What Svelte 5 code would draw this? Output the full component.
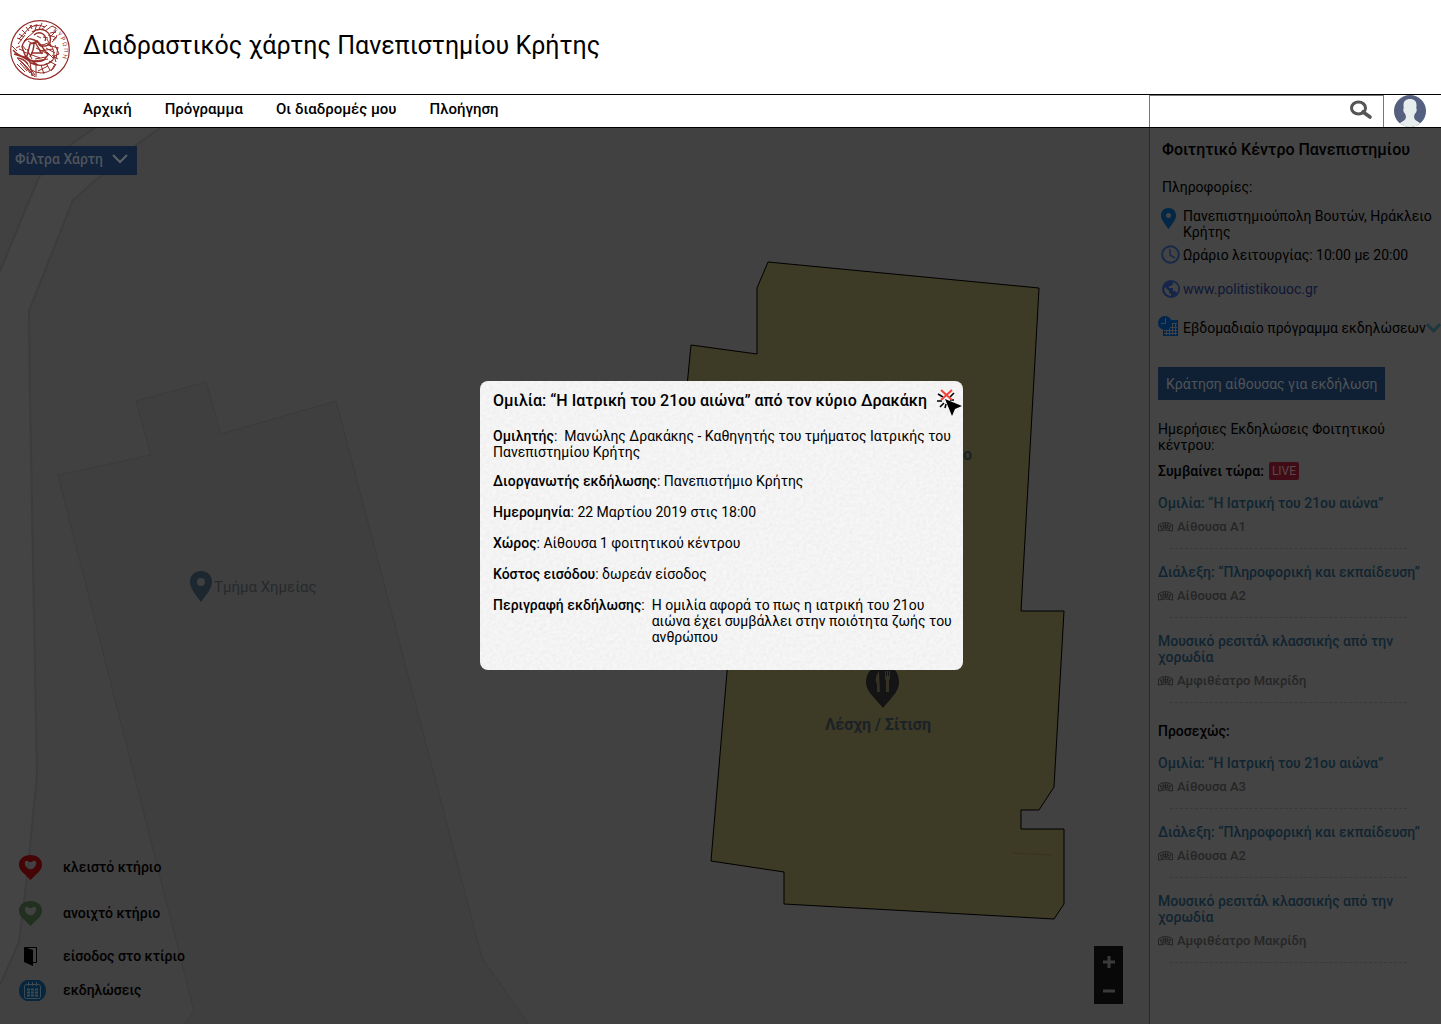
<script>
  const nav = ['Αρχική', 'Πρόγραμμα', 'Οι διαδρομές μου', 'Πλοήγηση'];

  const groups = [
    {
      title: 'Συμβαίνει τώρα:',
      live: true,
      events: [
        { name: 'Ομιλία: “Η Ιατρική του 21ου αιώνα”', room: 'Αίθουσα Α1' },
        { name: 'Διάλεξη: “Πληροφορική και εκπαίδευση”', room: 'Αίθουσα Α2' },
        { name: 'Μουσικό ρεσιτάλ κλασσικής από την χορωδία', room: 'Αμφιθέατρο Μακρίδη' }
      ]
    },
    {
      title: 'Προσεχώς:',
      live: false,
      events: [
        { name: 'Ομιλία: “Η Ιατρική του 21ου αιώνα”', room: 'Αίθουσα Α3' },
        { name: 'Διάλεξη: “Πληροφορική και εκπαίδευση”', room: 'Αίθουσα Α2' },
        { name: 'Μουσικό ρεσιτάλ κλασσικής από την χορωδία', room: 'Αμφιθέατρο Μακρίδη' }
      ]
    }
  ];
</script>

{#snippet heartPin(color)}
  <svg width="23" height="25" viewBox="0 0 23 25" aria-hidden="true">
    <path fill={color} fill-rule="evenodd" d="M11.500 0C18 0 23 4 23 9.500C23 14 20 17 17 19.500L11.500 25L6 19.500C3 17 0 14 0 9.500C0 4 5 0 11.500 0ZM6.500 6C5 8 6 11 8 13Q11.500 15.500 15 13C17 11 18 8 16.500 6Q14 5 13 7H10Q9 5 6.500 6Z" />
  </svg>
{/snippet}

<div class="page">
  <header class="brand">
    <svg class="logo" viewBox="0 0 60 60" fill="none" stroke="#962d28" aria-hidden="true">
      <circle cx="30" cy="30" r="29.300" stroke-width="1.200" />
      <path stroke-width="1.400" d="M22 12Q30 7 36 11Q42 15 40 23Q36 28 29 25M24 15Q28 11 33 14Q37 17 35 21M12 27Q14 18 21 19Q28 20 33 28L38 35L34 40Q27 43 20 40L15 35ZM17 36L20 24L25 22L32 34M21 33H33M24 23Q24 30 20 37M4 34Q16 37 21 43Q33 49 43 40M3 30Q8 36 15 37L28 45M7 38Q13 38 18 44" />
      <path stroke-width="1" d="M9 19L22 5M8 24L15 15M12 20L7 18M14 17L9 14M16 14L12 10M19 11L16 7M22 9L20 5M14 21L18 17L25 11M19 8L26 5M25 10L27 4M29 9L32 3M31 10L37 5M24 6Q30 4 35 7M35 11L42 6L46 8M40 13L46 12M40 17L46 11M43 20L46 17M38 15L45 17M42 22Q47 19 47 15M38 25L48 28M36 28L45 33M37 32L43 38M40 24Q46 31 43 40M45 25L49 34L44 36L46 42M48 27L46 39M48 39L42 35M39 41L46 45M36 43L40 50M31 45L34 54M26 45L26 57M20 42L22 56M8 39Q16 44 23 56M10 43L17 51M12 42L20 53M7 44L15 52M16 42L25 55M9 40Q18 47 25 57M20 49Q31 57 43 49L46 44M28 51L38 46M30 26L38 23M29 31L43 29M26 28L40 35M14 32L30 38M17 29L22 39M27 20L29 25L34 25M9 29L14 31M6 28L10 26M12 25L16 30M25 39L36 37M24 41L38 39M18 21L23 24L29 22M37 19L41 27M33 17L38 18M27 16L31 18M2 26L7 31M45 44L41 51" />
      <path id="ring" stroke="none" d="M43 11A23 23 0 0 1 35 53" />
      <text fill="#962d28" stroke="none" font-size="6"><textPath href="#ring">Ε Υ Ρ Ω Π Η</textPath></text>
    </svg>
    <h1>Διαδραστικός χάρτης Πανεπιστημίου Κρήτης</h1>
  </header>

  <nav class="bar">
    <div class="links">
      {#each nav as item}<a href="#menu">{item}</a>{/each}
    </div>
    <form class="search" role="search">
      <input type="search" aria-label="Αναζήτηση" />
      <button type="button" aria-label="Αναζήτηση">
        <svg width="24" height="20" viewBox="0 0 24 20" fill="none" stroke="#555">
          <ellipse cx="9.500" cy="8" rx="7" ry="6" stroke-width="3" />
          <path d="M14 12L21 17" stroke-width="3.600" stroke-linecap="round" />
        </svg>
      </button>
    </form>
    <a class="avatar" href="#profile" aria-label="Προφίλ">
      <svg width="32" height="32" viewBox="0 0 32 32">
        <defs><clipPath id="face"><circle cx="16" cy="16" r="16" /></clipPath></defs>
        <g clip-path="url(#face)">
          <rect width="32" height="32" fill="#556080" />
          <path fill="#e7eced" d="M16 4C20.500 4 22.500 6.500 22.500 10L22.300 13.500Q23 14 22.600 16Q22 18 21 18.500L20 21.500Q20 24 22 25.500L26 28V33H6V28L10 25.500Q12 24 12 21.500L11 18.500Q10 18 9.400 16Q9 14 9.700 13.500L9.500 10C9.500 6.500 11.500 4 16 4Z" />
        </g>
      </svg>
    </a>
  </nav>

  <main>
    <section class="map" aria-label="Χάρτης">
      <svg class="canvas" width="1149" height="896" viewBox="0 128 1149 896">
        <path fill="#444" d="M0 271L39 177L70 145L95 128H160L136 145L73 200L29 311L30 400L37 775L27 877L19 942L0 985Z" />
        <g fill="none" stroke="#3c3c3c" stroke-width="2">
          <path d="M0 271L39 177L70 145L95 128M160 128L136 145L73 200L29 311L30 400L37 775L27 877L19 942L0 985" />
        </g>
        <path fill="#3f3f3f" stroke="#3b3b3b" d="M58 475L151 455L136 401L206 382L221 434L336 401L380 568L482 958L530 1026H183L194 1011Z" />
        <path fill="#3d3a26" stroke="#000" d="M768 262L1039 288L1021 611H1064L1054 787L1039 810H1021V829H1064V904L1054 919L784 904V872L711 861L728 660L670 560L691 345L757 354V288Z" />
        <path fill="none" stroke="#38341f" d="M1012 853L1052 855" />
        <path fill="#1c2730" fill-rule="evenodd" d="M201 571C208 571 212 576 212 582C212 588 207 594 201 602C195 594 190 588 190 582C190 576 194 571 201 571ZM201 578A4 4 0 1 0 201 586A4 4 0 1 0 201 578Z" />
        <text class="dept" x="214" y="592">Τμήμα Χημείας</text>
        <path fill="#141414" d="M883 665C893 665 899 672 899 682C899 691 893 696 883 708C873 696 866 691 866 682C866 672 873 665 883 665Z" />
        <path fill="#343224" d="M879 671Q875 676 876 683H877V692H880ZM885 671V678Q885 680 886 680V692H889V680Q890 680 890 678V671H889V676H888V671H887V676H886V671Z" />
        <text class="place" x="878" y="730" text-anchor="middle">Λέσχη / Σίτιση</text>
        <text class="place" x="972" y="460" text-anchor="end">ο</text>
      </svg>

      <button class="filter">
        Φίλτρα Χάρτη
        <svg width="16" height="10" viewBox="0 0 16 10" fill="none" stroke="#5b6066" stroke-width="2"><path d="M1 1L8 8L15 1" /></svg>
      </button>

      <ul class="legend">
        <li><span>{@render heartPin('#450406')}</span>κλειστό κτήριο</li>
        <li><span>{@render heartPin('#21301f')}</span>ανοιχτό κτήριο</li>
        <li>
          <span>
            <svg width="13" height="20" viewBox="0 0 13 20" aria-hidden="true"><path d="M0 1L9 4V20L0 16Z" /><path fill="none" stroke="#000" d="M1 1.500H12.500V16.500H9" /></svg>
          </span>είσοδος στο κτίριο
        </li>
        <li>
          <span>
            <svg width="27" height="21" viewBox="0 0 27 21" fill="none" stroke="#3f4a50" aria-hidden="true">
              <path fill="#05263d" stroke="none" d="M7 0H20Q27 3 27 10.500Q27 18 20 21H7Q0 18 0 10.500Q0 3 7 0Z" />
              <rect x="5.500" y="4.500" width="16" height="14" rx="2" />
              <path d="M9.500 2V6M13.500 2V6M17.500 2V6" />
              <path stroke-width="2" stroke-dasharray="3 1" d="M8 9.500H19M8 12.500H19M8 15.500H19" />
            </svg>
          </span>εκδηλώσεις
        </li>
      </ul>

      <div class="zoom">
        <button aria-label="Μεγέθυνση"><svg width="12" height="12" viewBox="0 0 12 12"><path stroke="#3a3a3a" stroke-width="3" d="M0 6H12M6 0V12" /></svg></button>
        <button aria-label="Σμίκρυνση"><svg width="12" height="12" viewBox="0 0 12 12"><path stroke="#3a3a3a" stroke-width="3" d="M0 6H12" /></svg></button>
      </div>
    </section>

    <aside>
      <h2>Φοιτητικό Κέντρο Πανεπιστημίου</h2>
      <p class="info">Πληροφορίες:</p>
      <ul class="facts">
        <li class="address">
          <svg width="15" height="21" viewBox="0 0 15 21" aria-hidden="true"><path fill="#032746" fill-rule="evenodd" d="M7.500 0C12 0 15 3 15 7.500C15 12 11 16 7.500 21C4 16 0 12 0 7.500C0 3 3 0 7.500 0ZM7.500 5A2.500 2.500 0 1 0 7.500 10A2.500 2.500 0 1 0 7.500 5Z" /></svg>
          <span>Πανεπιστημιούπολη Βουτών, Ηράκλειο Κρήτης</span>
        </li>
        <li class="hours">
          <svg width="19" height="19" viewBox="0 0 19 19" fill="none" stroke="#17294a" stroke-width="2" aria-hidden="true"><circle cx="9.500" cy="9.500" r="8.300" /><path stroke-width="1.500" d="M9 4V10L14 13" /></svg>
          <span>Ωράριο λειτουργίας: 10:00 με 20:00</span>
        </li>
        <li class="site">
          <svg width="18" height="18" viewBox="0 0 18 18" aria-hidden="true"><circle cx="9" cy="9" r="9" fill="#15264a" /><path fill="#444" d="M3 7L7 11V13L9 14V16Q3 15 2 9ZM11 2V4L9 6H7V8H11V11H13L15 13Q17 10 16 6Q14 3 11 2Z" /></svg>
          <a href="#site">www.politistikouoc.gr</a>
        </li>
        <li class="weekly">
          <svg width="20" height="20" viewBox="0 0 20 20" aria-hidden="true">
            <path fill="#00264e" d="M7 4H20V20H5V12Z" />
            <path stroke="#444" d="M13 7.500H19M6 11.500H19M6 14.500H19M6 17.500H19M8.500 11V19M11.500 11V19M14.500 8V19M17.500 8V19" />
            <circle cx="7" cy="7" r="7" fill="#00264e" />
            <path fill="none" stroke="#444" d="M7.500 2V7.500H3" />
          </svg>
          <span>Εβδομαδιαίο πρόγραμμα εκδηλώσεων</span>
          <svg class="more" width="15" height="12" viewBox="0 0 15 12" fill="none" stroke="#1f3840" stroke-width="3" aria-hidden="true"><path d="M1 2L7.500 9L14 2" /></svg>
        </li>
      </ul>

      <button class="book">Κράτηση αίθουσας για εκδήλωση</button>

      <p class="daily">Ημερήσιες Εκδηλώσεις Φοιτητικού κέντρου:</p>
      {#each groups as group}
        <section class="group">
          <h3>{group.title}{#if group.live}<span class="live">LIVE</span>{/if}</h3>
          {#each group.events as event}
            <article>
              <a href="#event">{event.name}</a>
              <p>
                <svg width="15" height="10" viewBox="0 0 15 10" fill="none" stroke="#242424" aria-hidden="true">
                  <path d="M.500 9V3Q4 .500 7.500 .500T14.500 3V9L11 8.500Q7.500 7 4 8.500L.500 9M3 4.500Q7.500 1.500 12 4.500M4 6.500Q7.500 4.500 11 6.500M5 1.500L6 6M10 1.500L9 6M2 3L4 8M13 3L11 8M7.500 1V7" />
                </svg>{event.room}
              </p>
              <hr />
            </article>
          {/each}
        </section>
      {/each}
    </aside>
  </main>

  <div class="overlay">
    <div class="dialog" role="dialog" aria-labelledby="dialog-title">
      <svg class="paper" aria-hidden="true">
        <filter id="grain"><feTurbulence type="fractalNoise" baseFrequency=".3" numOctaves="2" /><feColorMatrix values="0 0 0 0 0  0 0 0 0 0  0 0 0 0 0  .060 0 0 0 -.015" /></filter>
        <rect width="100%" height="100%" filter="url(#grain)" />
      </svg>
      <h2 id="dialog-title">Ομιλία: “Η Ιατρική του 21ου αιώνα” από τον κύριο Δρακάκη</h2>
      <p class="speaker"><b>Ομιλητής</b>:&nbsp; Μανώλης Δρακάκης - Καθηγητής του τμήματος Ιατρικής του Πανεπιστημίου Κρήτης</p>
      <p><b>Διοργανωτής εκδήλωσης</b>: Πανεπιστήμιο Κρήτης</p>
      <p><b>Ημερομηνία</b>: 22 Μαρτίου 2019 στις 18:00</p>
      <p><b>Χώρος</b>: Αίθουσα 1 φοιτητικού κέντρου</p>
      <p><b>Κόστος εισόδου</b>: δωρεάν είσοδος</p>
      <p class="about"><span><b>Περιγραφή εκδήλωσης</b>:</span><span>Η ομιλία αφορά το πως η ιατρική του 21ου αιώνα έχει συμβάλλει στην ποιότητα ζωής του ανθρώπου</span></p>
      <button class="close" aria-label="Κλείσιμο">
        <svg width="26" height="28" viewBox="0 0 26 28">
          <path fill="none" stroke="#000" stroke-width="1.600" d="M17 4L13 8M0 12H5M3 18L7 14M13 11H17M9 15L8 19M1 5L6 8" />
          <path stroke="#f44336" stroke-width="2" d="M4 1L15 11M15 1L4 11" />
          <path d="M8 10L25 17L18 20L15 27Z" />
        </svg>
      </button>
    </div>
  </div>
</div>

<style>
  :global(body) { background: #444; }
  .page {
    position: relative;
    display: flex;
    flex-direction: column;
    min-height: 100vh;
    overflow: hidden;
    font: 14px/16px Roboto, sans-serif;
    color: #000;
  }
  h1, h2, h3, p, ul { margin: 0; padding: 0; font-weight: 400; }
  ul { list-style: none; }
  a { color: inherit; text-decoration: none; }
  button { border: 0; padding: 0; background: none; font: inherit; color: inherit; cursor: pointer; }
  svg { display: block; flex: none; }

  .brand { display: flex; align-items: center; gap: 13px; height: 94px; padding-left: 10px; background: #fff; }
  .logo { width: 60px; height: 60px; margin-top: 6px; }
  h1 { font-size: 25px; line-height: 32px; padding-bottom: 2px; }

  .bar {
    display: flex;
    height: 32px;
    border-top: 1px solid #000;
    border-bottom: 1px solid #000;
    background: #fff;
  }
  .links { flex: 1; display: flex; gap: 33px; padding: 6px 0 0 83px; font-size: 15px; font-weight: 500; }
  .search {
    display: flex;
    align-items: center;
    width: 235px;
    box-sizing: border-box;
    border: 1px solid #777;
    border-bottom: 0;
    padding-right: 10px;
  }
  .search input { flex: 1; min-width: 0; height: 24px; border: 0; outline: 0; padding: 0 8px; font: inherit; }
  .search button { margin-bottom: 4px; }
  .avatar { margin: 0 15px 0 10px; }

  main { flex: 1; display: flex; background: #444; }
  .map { position: relative; flex: 1; min-width: 0; overflow: hidden; background: #414141; }
  .canvas { position: absolute; top: 0; left: 0; }
  .dept { font-size: 15px; fill: #262a2c; }
  .place { font-size: 16px; font-weight: 700; fill: #1b2226; }
  .filter {
    position: absolute;
    top: 18px;
    left: 9px;
    display: flex;
    align-items: center;
    gap: 9px;
    height: 29px;
    padding: 0 9px 3px 6px;
    background: #12223a;
    color: #4e545c;
    font-weight: 500;
  }
  .legend {
    position: absolute;
    left: 19px;
    bottom: 20px;
    display: grid;
    grid-template-rows: 46px 46px 40px 28px;
    font-weight: 500;
  }
  .legend li { display: flex; align-items: center; }
  .legend span { width: 44px; }
  .legend li:nth-child(3) svg { margin-left: 5px; }
  .zoom { position: absolute; right: 26px; bottom: 20px; width: 29px; background: #080808; }
  .zoom button { display: grid; place-items: center; width: 29px; height: 29px; padding-top: 3px; }

  aside { width: 292px; box-sizing: border-box; border-left: 1px solid #2a2a2a; padding: 12px 0 40px 8px; }
  aside h2 { font-size: 16px; line-height: 20px; font-weight: 500; padding-left: 4px; }
  .info { margin-top: 19px; padding-left: 4px; }
  .facts { margin-top: 13px; }
  .facts li { display: grid; grid-template-columns: 25px 1fr auto; align-items: center; }
  .facts svg { justify-self: center; }
  .facts .address { align-items: start; }
  .address svg { margin-right: 4px; }
  .hours { margin-top: 5px; }
  .site { margin-top: 16px; color: #0e1736; }
  .weekly { margin-top: 18px; }
  .facts .weekly svg { justify-self: start; margin-bottom: 3px; }
  .facts .weekly .more { margin-bottom: 0; }
  .book { display: block; height: 33px; margin-top: 28px; padding: 0 8px; background: #0f2034; color: #505458; }
  .daily { margin: 21px 40px 0 0; }
  .group { margin-top: 20px; }
  .daily + .group { margin-top: 10px; }
  h3 { display: flex; align-items: center; font-size: 14px; line-height: 16px; height: 16px; margin-bottom: 16px; font-weight: 500; }
  .live { margin-left: 5px; padding: 0 3px; height: 18px; line-height: 18px; border-radius: 2px; background: #400d17; color: #594a4d; font-size: 12px; font-weight: 400; }
  article + article { margin-top: 15px; }
  article a { display: block; color: #102531; font-weight: 500; padding-right: 16px; }
  article p { display: flex; align-items: center; gap: 4px; margin-top: 8px; font-size: 13px; font-weight: 500; color: #262626; }
  hr { width: 237px; margin: 13px 0 0 12px; border: 0; border-top: 1px dashed #393939; }

  .overlay { position: absolute; inset: 0; display: flex; justify-content: center; align-items: flex-start; padding: 381px 0 0 2px; }
  .dialog {
    position: relative;
    width: 483px;
    box-sizing: border-box;
    padding: 10px 11px 25px 13px;
    border-radius: 8px;
    overflow: hidden;
    background: #f7f7f7;
  }
  .paper { position: absolute; inset: 0; width: 100%; height: 100%; }
  .dialog h2, .dialog p { position: relative; }
  .dialog h2 { font-size: 16px; line-height: 20px; font-weight: 500; margin-bottom: 17px; white-space: nowrap; }
  .dialog p { margin-bottom: 15px; }
  .dialog .speaker { margin-bottom: 13px; }
  .dialog .about { display: flex; gap: 7px; margin: 0; }
  .about span:first-child { white-space: nowrap; }
  b { font-weight: 500; }
  .close { position: absolute; top: 8px; right: 0; }
</style>
